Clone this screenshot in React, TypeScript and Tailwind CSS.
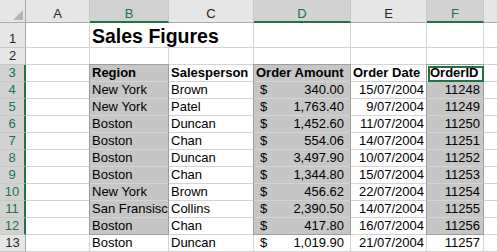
const rows: [string, string, string, string, string][] = [
  ["New York", "Brown", "340.00", "15/07/2004", "11248"],
  ["New York", "Patel", "1,763.40", "9/07/2004", "11249"],
  ["Boston", "Duncan", "1,452.60", "11/07/2004", "11250"],
  ["Boston", "Chan", "554.06", "14/07/2004", "11251"],
  ["Boston", "Duncan", "3,497.90", "10/07/2004", "11252"],
  ["Boston", "Chan", "1,344.80", "15/07/2004", "11253"],
  ["New York", "Brown", "456.62", "22/07/2004", "11254"],
  ["San Fransisco", "Collins", "2,390.50", "14/07/2004", "11255"],
  ["Boston", "Chan", "417.80", "16/07/2004", "11256"],
  ["Boston", "Duncan", "1,019.90", "21/07/2004", "11257"],
];

const colHeads = ["A", "B", "C", "D", "E", "F", ""];
const selCols = ["B", "D", "F"];

const sheetGrid =
  "col-start-1 row-start-1 grid grid-cols-[26px_64px_79px_85px_97px_76px_57px_13px] grid-rows-[23px_25px_repeat(12,17px)]";
const cell = "border-r border-b border-[#d4d4d4] overflow-hidden whitespace-nowrap leading-[16px]";
const selFill = "bg-[#c6c6c6]";

function RowHead({ n }: { n: number }) {
  const sel = n >= 3 && n <= 12;
  return (
    <div
      className={
        sel
          ? "flex items-end justify-center leading-[16px] bg-[#d2d2d2] text-[#217346] border-b border-b-[#c8c8c8] border-r-2 border-r-[#217346]"
          : "flex items-end justify-center leading-[16px] bg-[#e6e6e6] text-[#262626] border-b border-b-[#c8c8c8] border-r border-r-[#ababab]"
      }
    >
      {n}
    </div>
  );
}

export default function App() {
  return (
    <div className="w-[497px] h-[252px] overflow-hidden bg-white font-['Liberation_Sans',Arial,sans-serif] text-[13px] text-black grid">
      {/* cells */}
      <div className={sheetGrid}>
        {/* corner */}
        <div className="bg-[#e6e6e6] border-r border-b border-[#ababab]">
          <svg width="25" height="22" className="block">
            <polygon points="23,10 23,20 13,20" fill="#b4b4b4" />
          </svg>
        </div>

        {/* column headers */}
        {colHeads.map((c, i) => {
          const sel = selCols.includes(c);
          const last = i === colHeads.length - 1;
          return (
            <div
              key={"h" + i}
              className={
                sel
                  ? "flex justify-center pt-[6px] leading-[16px] bg-[#d2d2d2] text-[#217346] border-r border-r-[#c8c8c8] border-b-2 border-b-[#217346]"
                  : last
                    ? "bg-[#e6e6e6] border-b border-b-[#ababab]"
                    : "flex justify-center pt-[6px] leading-[16px] bg-[#e6e6e6] text-[#262626] border-r border-r-[#c8c8c8] border-b border-b-[#ababab]"
              }
            >
              {c}
            </div>
          );
        })}

        {/* row 1 */}
        <RowHead n={1} />
        <div className={cell} />
        <div className="col-span-2 flex items-end pl-[2px] pb-px border-r border-b border-[#d4d4d4] text-[19.5px] font-bold leading-none whitespace-nowrap">
          Sales Figures
        </div>
        <div className={cell} />
        <div className={cell} />
        <div className={cell} />
        <div className="border-b border-[#d4d4d4]" />

        {/* row 2 */}
        <RowHead n={2} />
        <div className={cell} />
        <div className={cell} />
        <div className={cell} />
        <div className={cell} />
        <div className={cell} />
        <div className={cell} />
        <div className="border-b border-[#d4d4d4]" />

        {/* row 3 headings */}
        <RowHead n={3} />
        <div className={cell} />
        <div className={`${cell} ${selFill} pl-[2px] font-bold`}>Region</div>
        <div className={`${cell} pl-[2px] font-bold`}>Salesperson</div>
        <div className={`${cell} ${selFill} pl-[2px] font-bold`}>Order Amount</div>
        <div className={`${cell} pl-[2px] font-bold`}>Order Date</div>
        <div className={`${cell} bg-white pl-[3px] font-bold`}>OrderID</div>
        <div className="border-b border-[#d4d4d4]" />

        {/* data rows */}
        {rows.map((r, i) => {
          const n = i + 4;
          const sel = n <= 12;
          return [
            <RowHead key={"rh" + n} n={n} />,
            <div key={"a" + n} className={cell} />,
            <div key={"b" + n} className={`${cell} ${sel ? selFill : ""} pl-[2px]`}>
              {r[0]}
            </div>,
            <div key={"c" + n} className={`${cell} pl-[2px]`}>
              {r[1]}
            </div>,
            <div key={"d" + n} className={`${cell} ${sel ? selFill : ""} flex justify-between pl-[6px] pr-[6px]`}>
              <span>$</span>
              <span>{r[2]}</span>
            </div>,
            <div key={"e" + n} className={`${cell} text-right pr-[2px]`}>
              {r[3]}
            </div>,
            <div key={"f" + n} className={`${cell} ${sel ? selFill : ""} text-right pr-[3px]`}>
              {r[4]}
            </div>,
            <div key={"g" + n} className="border-b border-[#d4d4d4]" />,
          ];
        })}
      </div>

      {/* selection outlines, stacked on the same grid */}
      <div className={`${sheetGrid} pointer-events-none`}>
        <div className="col-start-3 row-start-4 row-span-10 -ml-px -mt-px border border-[#9e9e9e]" />
        <div className="col-start-5 row-start-4 row-span-10 -ml-px -mt-px border border-[#9e9e9e]" />
        <div className="col-start-7 row-start-4 row-span-10 -ml-px -mt-px border border-[#9e9e9e]" />
        <div className="col-start-7 row-start-4 ml-px mt-px border-2 border-[#217346]" />
      </div>
    </div>
  );
}
